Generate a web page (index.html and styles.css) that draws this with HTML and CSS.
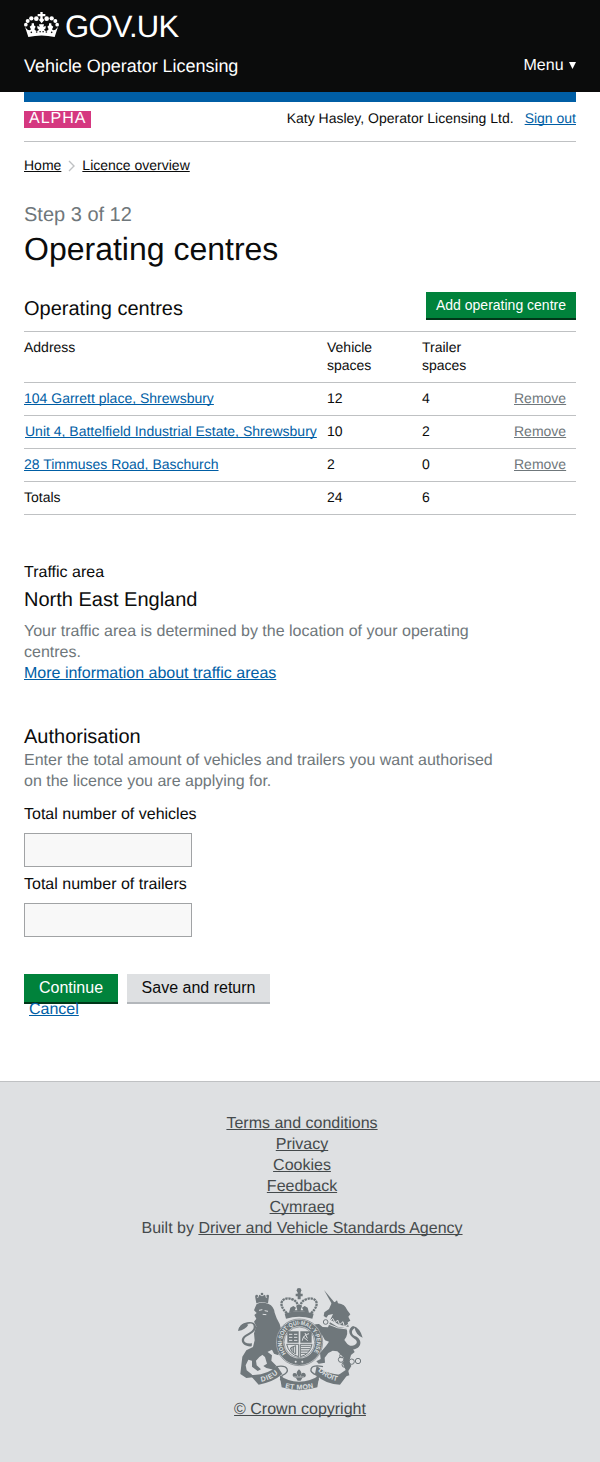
FILE: index.html
```html
<!DOCTYPE html>
<html lang="en">
<head>
<meta charset="utf-8">
<title>Operating centres</title>
<link rel="stylesheet" href="styles.css">
</head>
<body>
<header class="masthead">
  <a class="brand" href="#">
    <svg class="crown" viewBox="0 0 105 78" aria-hidden="true">
      <g fill="#fff">
        <path d="M13 75 L3 44 Q14 60 21 52 L17 44 Q27 34 35 44 L31 52 Q38 61 45 53 L40 49 V41 L47 45 L45 37 H60 L58 45 L65 41 V49 L60 53 Q67 61 74 52 L70 44 Q78 34 88 44 L84 52 Q91 60 102 44 L92 75 Q53 66 13 75Z"/>
        <path d="M49 0h7v6h8v7h-8v6l5 5-8 10-8-10 4-5v-6h-8V6h8z"/>
        <circle cx="22" cy="19" r="6.5"/><circle cx="37" cy="20" r="7"/><circle cx="11" cy="27" r="6"/><circle cx="5.500" cy="38" r="5.500"/>
        <circle cx="83" cy="19" r="6.5"/><circle cx="68" cy="20" r="7"/><circle cx="94" cy="27" r="6"/><circle cx="99.500" cy="38" r="5.500"/>
        <path d="M23 34h7v8h-7zM75 34h7v8h-7z"/>
      </g>
      <g fill="#0b0c0c"><circle cx="38" cy="60" r="2.5"/><circle cx="67" cy="60" r="2.5"/><circle cx="22" cy="61" r="2.5"/><circle cx="83" cy="61" r="2.5"/><path d="M46 58h5v3h-5zM55 58h5v3h-5z"/></g>
    </svg>
    <span class="brand-name">GOV.UK</span>
  </a>
  <div class="service">
    <span class="service-name">Vehicle Operator Licensing</span>
    <span class="menu">Menu <svg class="arrow" viewBox="0 0 7 7"><path d="M0 0h7L3.5 7z" fill="#fff"/></svg></span>
  </div>
</header>
<main class="page">
  <div class="phase">
    <strong class="phase-tag">ALPHA</strong>
    <span class="user">Katy Hasley, Operator Licensing Ltd.</span>
    <a class="link sign-out" href="#">Sign out</a>
  </div>
  <nav class="crumbs">
    <a class="crumb" href="#">Home</a>
    <svg class="chevron" viewBox="0 0 7 12"><path d="M1 1l5 5-5 5" fill="none" stroke="#bfc1c3" stroke-width="1.4"/></svg>
    <a class="crumb crumb-last" href="#">Licence overview</a>
  </nav>
  <p class="step">Step 3 of 12</p>
  <h1 class="title">Operating centres</h1>
  <div class="table-head">
    <h2 class="heading heading-wide">Operating centres</h2>
    <button class="button button-small">Add operating centre</button>
  </div>
  <table class="centres">
    <colgroup><col class="c1"><col class="c2"><col class="c3"><col class="c4"></colgroup>
    <tr><th>Address</th><th>Vehicle<br>spaces</th><th>Trailer<br>spaces</th><th></th></tr>
    <tr><td><a class="link addr-a" href="#">104 Garrett place, Shrewsbury</a></td><td>12</td><td>4</td><td><a class="remove" href="#">Remove</a></td></tr>
    <tr><td><a class="link addr-b" href="#">Unit 4, Battelfield Industrial Estate, Shrewsbury</a></td><td>10</td><td>2</td><td><a class="remove" href="#">Remove</a></td></tr>
    <tr><td><a class="link addr-c" href="#">28 Timmuses Road, Baschurch</a></td><td>2</td><td>0</td><td><a class="remove" href="#">Remove</a></td></tr>
    <tr><td>Totals</td><td>24</td><td>6</td><td></td></tr>
  </table>
  <section class="traffic">
    <p class="label">Traffic area</p>
    <h2 class="heading area">North East England</h2>
    <p class="hint">Your traffic area is determined by the location of your operating<br>centres.</p>
    <a class="link more" href="#">More information about traffic areas</a>
  </section>
  <section class="auth">
    <h2 class="heading auth-title">Authorisation</h2>
    <p class="hint hint-auth">Enter the total amount of vehicles and trailers you want authorised<br>on the licence you are applying for.</p>
    <label class="field"><span class="label">Total number of vehicles</span><input class="input" type="text"></label>
    <label class="field"><span class="label">Total number of trailers</span><input class="input" type="text"></label>
  </section>
  <div class="actions">
    <button class="button">Continue</button>
    <button class="button button-grey">Save and return</button>
  </div>
  <a class="link cancel" href="#">Cancel</a>
</main>
<footer class="footer">
  <a class="foot-link" href="#">Terms and conditions</a>
  <a class="foot-link" href="#">Privacy</a>
  <a class="foot-link" href="#">Cookies</a>
  <a class="foot-link" href="#">Feedback</a>
  <a class="foot-link" href="#">Cymraeg</a>
  <p class="built">Built by <a class="foot-link" href="#">Driver and Vehicle Standards Agency</a></p>
  <svg class="arms" viewBox="21 21 384 312" aria-hidden="true">
    <defs>
      <path id="motto" d="M168 220A52 52 0 1 1 248 220"/>
      <path id="dieu" d="M94 305Q125 301 148 276"/>
      <path id="mon" d="M165 323Q208 334 252 323"/>
      <path id="droit" d="M264 272Q288 298 326 304"/>
    </defs>
    <g fill="#6f777b">
      <!-- lion -->
      <path d="M79 70L75 48 84 54 88 44 96 49 105 44 108 54 117 48 114 70Q95 64 79 70Z"/>
      <circle cx="96" cy="42" r="4"/><circle cx="80" cy="48" r="4"/><circle cx="113" cy="48" r="4"/>
      <path d="M80 72Q96 65 116 72Q131 78 134 98L140 115 149 132 154 150 144 188 151 204 145 226 132 221 126 209 112 216 100 223 88 231 78 242 80 256 93 268 83 273 66 260 66 242 55 239 47 256 50 271 65 283 70 292 49 294 31 282 33 264 37 230 49 211 69 201 74 181 72 160 79 139 72 125 79 116 73 105 80 99 72 91 75 83Z"/>
      <path d="M105 210L126 226 124 242 139 257 131 269 109 264 100 258 111 251 105 231 94 222Z"/>
      <path d="M65 199C38 201 28 181 41 169C55 157 76 154 70 135C66 127 53 130 40 137L25 149Q30 136 44 129C65 121 83 130 77 147C69 165 45 165 42 180Q42 192 66 190Z"/>
      <path d="M24 153Q30 130 46 130L55 134Q47 149 24 153Z"/>
      <!-- unicorn -->
      <path d="M282 30L313 67 306 73Z"/>
      <path d="M306 67L315 66 321 61 324 70Q345 72 352 91L361 103 355 110 361 122 353 127 356 141Q342 136 328 134L301 119 309 102 295 105 289 113 281 108 283 97 297 87Z"/>
      <path d="M300 127L322 140 349 145Q357 163 343 180L352 192 366 202 374 216 363 225 358 243 364 258 355 273 358 286 332 294 322 287 347 270 339 252 342 234 322 214 308 212 295 219 284 233 285 248 266 251 259 244 272 237 270 219 288 198 297 185 285 181 276 165 256 158 249 148 256 133 267 132 278 141 294 142Z"/>
      <path d="M350 197C381 201 388 184 373 176C353 164 354 145 369 138Q390 143 398 173Q378 166 374 144C360 154 365 166 380 170C404 187 386 212 361 208Z"/>
      <path d="M256 152L266 167 254 173 248 181 242 168Z"/>
      <!-- crown above the shield -->
      <circle cx="207" cy="31" r="7"/><path d="M203 34h9v7h6v8h-6v9h-9v-9h-6v-8h6z"/>
      <path d="M164 101Q207 87 251 101L247 116Q207 104 168 116Z"/>
      <path d="M177 98L181 83 190 78 198 83 194 91 202 91 199 79 207 73 215 79 212 91 220 91 216 83 224 78 233 83 237 98Q207 91 177 98Z"/>
    </g>
    <g fill="none" stroke="#6f777b">
      <path d="M171 100C137 68 162 49 184 57Q203 62 204 82M243 100C277 68 253 49 231 57Q212 62 211 82" stroke-width="7" stroke-dasharray="7 2"/>
      <circle cx="208" cy="187" r="70" fill="#dee0e2" stroke-width="2"/>
      <circle cx="208" cy="187" r="58" stroke-width="20"/>
      <circle cx="208" cy="187" r="46" fill="#dee0e2" stroke-width="2"/>
      <path d="M172 154h34v34h-34zM211 154h34v34h-34z" fill="#6f777b" stroke="none"/>
      <path d="M170 193h36v37q-29-7-36-37zM211 193h35q-5 30-35 37z" stroke-width="3"/>
      <path d="M181 204l16-7v25l-12-8zM186 200v14M191 198v20M213 199h29M213 206h27M213 213h24M213 220h17" stroke-width="3"/>
      <path d="M177 163h10M192 163h10M177 172h10M192 172h10M177 181h10M192 181h10M217 182q2-17 20-21M220 171l13 11M225 159l7 16" stroke="#dee0e2" stroke-width="3"/>
      <circle cx="333" cy="239" r="8" stroke-width="3"/><circle cx="344" cy="254" r="8" stroke-width="3"/><circle cx="365" cy="245" r="8" stroke-width="3"/><circle cx="384" cy="243" r="8" stroke-width="3"/><circle cx="335" cy="227" r="6" stroke-width="3"/><circle cx="287" cy="126" r="7" stroke-width="3"/>
      <path d="M298 125l10-10 7 13 8-8 6 14 10-9 4 15 12-7M294 132q28 15 59 15" stroke="#dee0e2" stroke-width="3"/>
      <path d="M87 91l10-2M104 92l10 2M98 103l11 1" stroke="#dee0e2" stroke-width="3"/>
      <path d="M139 260C176 253 182 277 157 286L151 301M279 260C237 251 232 277 261 286L265 301" stroke-width="4"/>
    </g>
    <g fill="#6f777b">
      <path d="M60 285Q112 286 141 257L157 282Q130 306 86 314Z"/>
      <path d="M260 257Q289 285 352 285L330 314Q286 313 255 282Z"/>
      <path d="M149 286Q173 305 207 305Q242 305 268 286L262 322Q208 339 155 322Z"/>
      <path d="M207 268q12 11 4 20 0 3 2 0 1-13 12-8 8 11-8 14l-5 8h-9l-5-8q-15-4-8-14 10-4 12 8 3 2 2 0-9-10 3-20z"/>
    </g>
    <path d="M191 291h31" stroke="#dee0e2" stroke-width="2"/>
    <g class="motto" fill="#dee0e2">
      <text font-size="18"><textPath href="#motto" textLength="230" lengthAdjust="spacingAndGlyphs">HONI·SOIT·QUI·MAL·Y·PENSE</textPath></text>
      <text font-size="21"><textPath href="#dieu" textLength="57">DIEU</textPath></text>
      <text font-size="21"><textPath href="#mon" textLength="86">ET MON</textPath></text>
      <text font-size="21"><textPath href="#droit" textLength="66">DROIT</textPath></text>
    </g>
    <circle cx="197" cy="245" r="3" fill="#dee0e2"/><circle cx="217" cy="245" r="3" fill="#dee0e2"/>
  </svg>
  <a class="foot-link copyright" href="#">© Crown copyright</a>
</footer>
</body>
</html>
```
FILE: styles.css
```css
* { box-sizing: border-box; }
body { margin: 0; background: #fff; color: #0b0c0c; font: 16px/21px "Liberation Sans", Arial, sans-serif; text-rendering: geometricPrecision; }
h1, h2, p { margin: 0; font-weight: 400; }
a { text-underline-offset: 1px; text-decoration-thickness: 1px; text-decoration-skip-ink: none; }
.masthead { height: 92px; padding: 12px 24px 0; background: #0b0c0c; color: #fff; }
.brand { display: flex; color: #fff; text-decoration: none; }
.crown { width: 35px; height: 26px; margin-right: 6px; }
.brand-name { font-size: 31px; line-height: 30px; letter-spacing: -0.7px; }
.service { display: flex; justify-content: space-between; margin-top: 13px; line-height: 22px; }
.service-name { font-size: 18px; letter-spacing: -0.03px; }
.menu { font-size: 16px; line-height: 22px; }
.arrow { width: 7px; height: 7px; margin-left: 1px; vertical-align: 1px; }
.page { height: 989px; margin: 0 24px; border-top: 10px solid #005ea5; }
.phase { display: flex; align-items: center; height: 40px; padding-bottom: 6px; border-bottom: 1px solid #bfc1c3; font-size: 14px; }
.phase-tag { width: 67px; height: 17px; padding-left: 5px; margin-top: 1px; background: #d53880; color: #fff; font-size: 16px; font-weight: 400; line-height: 16px; letter-spacing: 1px; }
.user { margin-left: auto; }
.sign-out { margin-left: 11px; }
.link { color: #005ea5; }
.crumbs { display: flex; align-items: center; height: 20px; margin-top: 13px; font-size: 14px; line-height: 20px; }
.crumb { color: #0b0c0c; }
.chevron { width: 7px; height: 12px; margin: 2px 7px 0 7px; }
.step { margin-top: 26px; color: #6f777b; font-size: 20px; line-height: 28px; }
.title { margin-top: 2px; font-size: 32px; line-height: 36px; }
.table-head { display: flex; justify-content: space-between; align-items: flex-start; height: 39px; margin-top: 25px; }
.heading { font-size: 20px; line-height: 24px; }
.heading-wide { margin-top: 5px; }
.button { height: 30px; padding: 0 15px 1px; border: 0; border-bottom: 2px solid #003618; background: #00823b; color: #fff; font: 16px/26px "Liberation Sans", Arial, sans-serif; white-space: nowrap; }
.button-small { width: 150px; height: 28px; padding: 0; font-size: 14px; }
.button-grey { width: 143px; padding: 0 0 1px; margin-left: 9px; background: #dee0e2; border-color: #b3b7bb; color: #0b0c0c; }
.centres { width: 552px; table-layout: fixed; border-collapse: separate; border-spacing: 0; border-top: 1px solid #bfc1c3; font-size: 14px; line-height: 18px; }
.c1 { width: 303px; } .c2 { width: 95px; } .c3 { width: 92px; } .c4 { width: 62px; }
.centres th, .centres td { padding: 6px 0 8px; border-bottom: 1px solid #bfc1c3; font-weight: 400; text-align: left; vertical-align: top; white-space: nowrap; }
.remove { color: #6f777b; }
.addr-b { margin-left: 1px; }
.traffic { margin-top: 47px; }
.area { margin-top: 5px; }
.hint { margin-top: 9px; color: #6f777b; }
.more { display: block; width: max-content; }
.auth { margin-top: 41px; }
.hint-auth { margin-top: 1px; }
.field { display: block; margin-top: 12px; }
.field .label { display: block; }
.field + .field { margin-top: 7px; }
.input { display: block; width: 168px; height: 34px; margin-top: 8px; border: 1px solid #a1a3a5; background: #f8f8f8; }
.actions { display: flex; margin-top: 37px; }
.cancel { display: block; width: max-content; margin: -5px 0 0 5px; }
.footer { display: flex; flex-direction: column; align-items: center; height: 381px; padding: 31px 0 0 4px; border-top: 1px solid #bfc1c3; background: #dee0e2; color: #454a4c; }
.foot-link { color: #454a4c; }
.arms { width: 128px; height: 104px; margin: 48px 3px 8px 0; }
.copyright { margin-right: 4px; }
.motto { font-family: "Liberation Sans", Arial, sans-serif; font-weight: 700; }
```
